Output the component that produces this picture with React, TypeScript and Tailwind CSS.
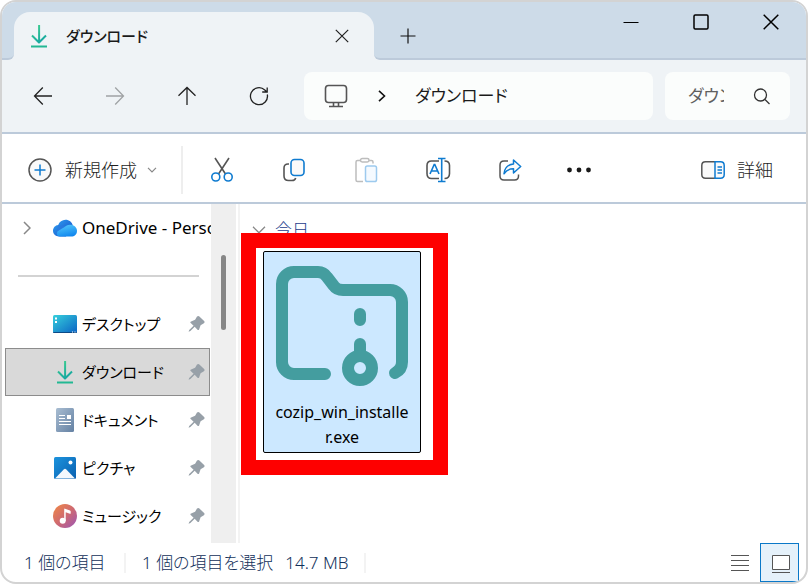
import React from "react";
import { clsx } from "clsx";

type IconProps = { className?: string };

function DownloadIcon({ className }: IconProps) {
  return (
    <svg viewBox="0 0 18 24" className={className} fill="none" strokeWidth="2" aria-hidden="true">
      <defs>
        <linearGradient id="download" gradientUnits="userSpaceOnUse" x1="2" y1="2" x2="12" y2="20">
          <stop offset="0" stopColor="#3fcf8e" />
          <stop offset="1" stopColor="#11a3a3" />
        </linearGradient>
      </defs>
      <path
        d="M9.1 1v17M2 11.5l7 7 7-7"
        stroke="url(#download)"
        strokeLinejoin="round"
      />
      <path d="M1 22.5h16" stroke="#22b893" />
    </svg>
  );
}

function PinIcon() {
  return (
    <svg viewBox="0 0 18 18" className="size-[18px] shrink-0" fill="#97a0a8" aria-hidden="true">
      <path d="M9 1.600c.8-.9 1.700-.9 2.400-.2l4.700 4.600c.7.8.6 1.700-.2 2.200l-3.300 2-1.500 4.200c-.3.800-1 .9-1.600.3l-2.800-2.900-4.300 4.300-1.800.7.600-1.800 4.400-4.200L2.700 8c-.6-.6-.4-1.300.4-1.600l4-1.600z" />
    </svg>
  );
}

function OneDriveIcon() {
  return (
    <svg viewBox="0 0 24 18" className="h-[18px] w-6" aria-hidden="true">
      <defs>
        <linearGradient id="cloudBack" x1="0" y1="0" x2="1" y2="1">
          <stop offset="0" stopColor="#2ea5f4" />
          <stop offset="1" stopColor="#1646c4" />
        </linearGradient>
        <linearGradient id="cloudFront" x1="0.2" y1="0" x2="0.6" y2="1">
          <stop offset="0" stopColor="#53c8fb" />
          <stop offset="1" stopColor="#1187ee" />
        </linearGradient>
      </defs>
      <path
        d="M6 17.500C2.600 17.500 0 15.100 0 11.800 0 8.700 2.300 6.300 5.200 6 6.300 2.800 9.200.700 12.500.700c3.700 0 6.500 2.300 7.300 5.600L13 17.500z"
        fill="url(#cloudBack)"
      />
      <path
        d="M7 17.500c-1.900 0-3.200-1.200-3.200-3 0-1.500.8-2.400 2-3.200l7.500-4.600c1-.6 2.300-1 3.700-1 4 0 7 2.700 7 6.200 0 3.300-2.600 5.600-5.800 5.600z"
        fill="url(#cloudFront)"
      />
      <path d="M5 6.100c3-.4 5.300 1 7.500 1.300L5.800 11.400C3.900 12.500 3.200 14 4 16" fill="#2b7be0" opacity="0.700" />
    </svg>
  );
}

function DesktopIcon() {
  return (
    <svg viewBox="0 0 24 18" className="h-[18px] w-6" aria-hidden="true">
      <defs>
        <linearGradient id="desktop" x1="0" y1="0" x2="1" y2="1">
          <stop offset="0" stopColor="#36d0dc" />
          <stop offset="1" stopColor="#0b63c4" />
        </linearGradient>
      </defs>
      <rect width="24" height="18" rx="1.500" fill="url(#desktop)" />
      <path d="M0 17h24q0 1-1 1H1q-1 0-1-1z" fill="#0d4a86" />
      <path d="M2 2.500h2v2H2zM2 6h2v2H2zM19 16.500h1v1h-1zM21.500 16.500h1v1h-1z" fill="#fff" />
    </svg>
  );
}

function DocumentIcon() {
  return (
    <svg viewBox="0 0 18 24" className="h-6 w-[18px]" aria-hidden="true">
      <defs>
        <linearGradient id="document" x1="0" y1="0" x2="1" y2="1">
          <stop offset="0" stopColor="#a9bdd2" />
          <stop offset="1" stopColor="#6481a3" />
        </linearGradient>
      </defs>
      <rect width="18" height="24" rx="1.500" fill="url(#document)" />
      <path d="M3 7.500h6M3 10.500h6M3 13.500h12M3 16.500h12" stroke="#fff" strokeWidth="1.200" />
      <path d="M11 7h4v4h-4z" fill="#fff" />
    </svg>
  );
}

function PicturesIcon() {
  return (
    <svg viewBox="0 0 22 22" className="size-[22px]" aria-hidden="true">
      <defs>
        <linearGradient id="pictures" x1="0" y1="0" x2="1" y2="1">
          <stop offset="0" stopColor="#1c93dd" />
          <stop offset="1" stopColor="#0a60b0" />
        </linearGradient>
      </defs>
      <rect width="22" height="22" rx="1.500" fill="url(#pictures)" />
      <path d="M1 21.500 9.700 12.500q1.300-1.300 2.600 0L21 21.500z" fill="#f3f8fd" />
      <circle cx="16.500" cy="5.500" r="2" fill="#fff" />
    </svg>
  );
}

function MusicIcon() {
  return (
    <svg viewBox="0 0 24 24" className="size-6" aria-hidden="true">
      <defs>
        <linearGradient id="music" x1="0" y1="0.100" x2="0.900" y2="1">
          <stop offset="0" stopColor="#ee8648" />
          <stop offset="0.500" stopColor="#cf6a70" />
          <stop offset="1" stopColor="#a057b0" />
        </linearGradient>
      </defs>
      <circle cx="12" cy="12" r="12" fill="url(#music)" />
      <circle cx="9.700" cy="16.800" r="3" fill="#fff" />
      <path d="M11.200 17V5.200q0-.8.8-.5l5 1.800q.7.300.7 1v1.700q0 .8-.8.500l-4.200-1.500V17z" fill="#fff" />
    </svg>
  );
}

function ZipFolderIcon() {
  return (
    <svg
      viewBox="0 0 156 140"
      className="h-[140px] w-[156px]"
      fill="none"
      stroke="#449d9f"
      strokeWidth="12"
      strokeLinecap="round"
      aria-hidden="true"
    >
      <path d="M61 122H30a12 12 0 0 1-12-12V32a12 12 0 0 1 12-12h24c4 0 7 2 9 5l7 9c2 3 5 4 9 4h47a12 12 0 0 1 12 12v60c0 5-3 9-7 11" />
      <path d="M96 62v6M96 92v8" />
      <circle cx="96" cy="116" r="12" />
    </svg>
  );
}

function ToolButton({
  label,
  className,
  children,
}: {
  label: string;
  className?: string;
  children: React.ReactNode;
}) {
  return (
    <button type="button" aria-label={label} className={clsx("flex h-12 items-center justify-center", className)}>
      {children}
    </button>
  );
}

const places = [
  { name: "デスクトップ", icon: <DesktopIcon /> },
  { name: "ダウンロード", icon: <DownloadIcon className="h-6 w-[18px]" />, selected: true },
  { name: "ドキュメント", icon: <DocumentIcon /> },
  { name: "ピクチャ", icon: <PicturesIcon /> },
  { name: "ミュージック", icon: <MusicIcon /> },
];

function TitleBar() {
  return (
    <header className="flex h-[58px] bg-[#eff3f6]">
      <div className="w-3 rounded-br-md border-b-2 border-[#bccada] bg-[#cddbe8]" />
      <div className="w-[360px] bg-[#cddbe8] pt-2.5">
        <div className="flex h-full items-center rounded-t-2xl bg-[#eff3f6] pr-5 pl-4">
          <DownloadIcon className="h-6 w-[18px]" />
          <span className="ml-[18px] flex-1 text-[15px] font-medium text-[#1a1a1a]">ダウンロード</span>
          <ToolButton label="タブを閉じる" className="w-6">
            <svg viewBox="0 0 14 14" className="size-3.5" stroke="#222" strokeWidth="1.200">
              <path d="m.8.8 12.400 12.400M13.200.8.800 13.200" />
            </svg>
          </ToolButton>
        </div>
      </div>
      <div className="flex flex-1 justify-between rounded-bl-md border-b-2 border-[#bccada] bg-[#cddbe8]">
        <ToolButton label="新しいタブ" className="mt-2.5 w-[68px]">
          <svg viewBox="0 0 16 16" className="size-4" stroke="#111" strokeWidth="1.200">
            <path d="M8 .5v15M.5 8h15" />
          </svg>
        </ToolButton>
        <div className="flex h-10">
          <ToolButton label="最小化" className="w-[70px]">
            <svg viewBox="0 0 16 16" className="size-4 -translate-y-1" stroke="#000" strokeWidth="1.200">
              <path d="M.5 8.500h15" />
            </svg>
          </ToolButton>
          <ToolButton label="最大化" className="w-[70px]">
            <svg viewBox="0 0 16 16" className="size-4 -translate-y-1" fill="none" stroke="#000" strokeWidth="1.500">
              <rect x="1" y="1" width="14" height="14" rx="1.200" />
            </svg>
          </ToolButton>
          <ToolButton label="閉じる" className="w-[70px]">
            <svg viewBox="0 0 16 16" className="size-4 -translate-y-1" stroke="#000" strokeWidth="1.500">
              <path d="m.7.7 14.600 14.600M15.300.7.700 15.300" />
            </svg>
          </ToolButton>
        </div>
      </div>
    </header>
  );
}

function NavBar() {
  return (
    <nav className="flex h-[74px] items-center border-b-2 border-[#bccada] bg-[#eff3f6] pr-4 pl-[5px]">
      <ToolButton label="戻る" className="w-[72px]">
        <svg viewBox="0 0 20 20" className="size-5" fill="none" stroke="#222" strokeWidth="1.300">
          <path d="M19 10H1.500M9.800 1.500 1.500 10l8.300 8.500" />
        </svg>
      </ToolButton>
      <ToolButton label="進む" className="w-[72px]">
        <svg viewBox="0 0 20 20" className="size-5" fill="none" stroke="#a0a3a5" strokeWidth="1.300">
          <path d="M1 10h17.500M10.200 1.500l8.300 8.500-8.300 8.500" />
        </svg>
      </ToolButton>
      <ToolButton label="上へ" className="w-[72px]">
        <svg viewBox="0 0 20 20" className="size-5" fill="none" stroke="#222" strokeWidth="1.300">
          <path d="M10 19V1.500M1.500 9.800 10 1.500l8.500 8.300" />
        </svg>
      </ToolButton>
      <ToolButton label="更新" className="w-[72px]">
        <svg viewBox="0 0 20 20" className="size-5" fill="none" stroke="#222" strokeWidth="1.300">
          <path d="M18.300 8.500A8.500 8.500 0 1 1 15.800 4L18 6M18.200 1.500V6h-5" />
        </svg>
      </ToolButton>
      <div className="ml-[9px] flex h-12 flex-1 items-center rounded-lg bg-[#fbfdfc] pl-5">
        <svg viewBox="0 0 24 24" className="size-6" fill="none" stroke="#555" strokeWidth="1.600" aria-hidden="true">
          <rect x="1.500" y="1.500" width="21" height="17" rx="3" />
          <path d="M9.500 19v3.500M14.500 19v3.500M5 22.500h14" />
        </svg>
        <svg viewBox="0 0 8 12" className="ml-[30px] h-3 w-2" fill="none" stroke="#111" strokeWidth="1.600" aria-hidden="true">
          <path d="m1 .8 5.500 5.200L1 11.200" />
        </svg>
        <span className="ml-[29px] text-[17px] text-[#1a1a1a]">ダウンロード</span>
      </div>
      <div className="ml-3 flex h-12 w-[125px] items-center rounded-lg bg-[#fbfdfc] pl-[23px]">
        <input
          type="text"
          aria-label="検索"
          placeholder="ダウンロードの検索"
          className="w-9 bg-transparent text-[17px] outline-none placeholder:text-[#606060]"
        />
        <ToolButton label="検索を実行" className="ml-6 w-7">
          <svg viewBox="0 0 18 18" className="size-[18px]" fill="none" stroke="#333" strokeWidth="1.300">
            <circle cx="7.500" cy="8" r="6" />
            <path d="m12 12.500 4.500 4.500" />
          </svg>
        </ToolButton>
      </div>
    </nav>
  );
}

function CommandBar() {
  return (
    <div className="flex h-[70px] items-center border-b-2 border-[#bccada] bg-white pt-1 text-lg text-[#1f1f1f]">
      <button type="button" className="flex h-12 w-[179px] items-center pl-[26px]">
        <svg viewBox="0 0 24 24" className="size-6" fill="none" strokeWidth="1.500" aria-hidden="true">
          <circle cx="12" cy="12" r="11" fill="#fafafa" stroke="#555" />
          <path d="M12 6.500v11M6.500 12h11" stroke="#0f7bd0" />
        </svg>
        <span className="ml-[13px] font-light">新規作成</span>
        <svg viewBox="0 0 10 6" className="ml-2.5 h-1.5 w-2.5" fill="none" stroke="#888" strokeWidth="1.200" aria-hidden="true">
          <path d="m1 .8 4 4 4-4" />
        </svg>
      </button>
      <div className="h-12 w-0.5 bg-[#eee]" />
      <ToolButton label="切り取り" className="ml-[3px] w-[72px]">
        <svg viewBox="0 0 24 26" className="h-[26px] w-6" fill="none" strokeWidth="1.600">
          <path d="m5 1 10.500 16M19 1 8.500 17" stroke="#555" />
          <circle cx="5.800" cy="20" r="4" stroke="#0f7bd0" />
          <circle cx="18.200" cy="20" r="4" stroke="#0f7bd0" />
        </svg>
      </ToolButton>
      <ToolButton label="コピー" className="w-[72px]">
        <svg viewBox="0 0 24 24" className="size-6" fill="none" strokeWidth="1.600">
          <path d="M7 6H6C3.500 6 2 7.500 2 10v8c0 3 1.500 4.500 4.500 4.500H10c2 0 3.300-.8 3.700-2.500" stroke="#555" />
          <rect x="9" y="1.500" width="13" height="16" rx="3.500" fill="#fafafa" stroke="#0f7bd0" />
        </svg>
      </ToolButton>
      <ToolButton label="貼り付け" className="w-[72px]">
        <svg viewBox="0 0 24 26" className="h-[26px] w-6" fill="none" strokeWidth="1.500">
          <path d="M7 3.500H3.500q-1.500 0-1.500 1.500v18q0 1.500 1.500 1.500H9M15 3.500h2.500q1.500 0 1.500 1.500v1.500" stroke="#bdbdbd" />
          <rect x="6.500" y="1.500" width="8.500" height="3.500" rx="1.700" fill="#fff" stroke="#bdbdbd" />
          <rect x="11.500" y="9" width="11" height="15.500" rx="1.800" fill="#f5faff" stroke="#9dcaee" />
        </svg>
      </ToolButton>
      <ToolButton label="名前の変更" className="w-[72px]">
        <svg viewBox="0 0 26 26" className="size-[26px]" fill="none" strokeWidth="1.600">
          <path
            d="M14 4H6.500C3.500 4 2 5.500 2 8.500v8C2 19.500 3.500 21.500 6.500 21.500H14M19.500 4C22.500 4 24.500 5.500 24.500 8.500v8c0 3-2 5-5 5"
            stroke="#555"
          />
          <path d="m5 17 4.200-9.500h.6L14 17M6.500 14h6M16.700 1.500v23M13 1.500h7.500M13 24.500h7.500" stroke="#0f7bd0" />
        </svg>
      </ToolButton>
      <ToolButton label="共有" className="w-[72px]">
        <svg viewBox="0 0 24 24" className="size-6" fill="none" strokeWidth="1.500" strokeLinejoin="round">
          <path d="M10 3H6Q2 3 2 7v11q0 4 4 4h10.500q4 0 4-4v-1.500" stroke="#555" />
          <path d="M15.500 2 22.700 8.500l-7.200 6.500v-4.200C11 10.700 8.500 12 6 15.800c.5-5.800 4-9.300 9.500-9.800z" fill="#fafafa" stroke="#0f7bd0" />
        </svg>
      </ToolButton>
      <ToolButton label="もっと見る" className="w-[66px]">
        <svg viewBox="0 0 24 6" className="h-1.5 w-6" fill="#1a1a1a">
          <circle cx="2.500" cy="3" r="2.400" />
          <circle cx="12" cy="3" r="2.400" />
          <circle cx="21.500" cy="3" r="2.400" />
        </svg>
      </ToolButton>
      <button type="button" className="mr-[33px] ml-auto flex h-12 items-center gap-3">
        <svg viewBox="0 0 24 18" className="h-[18px] w-6" fill="#fafafa" strokeWidth="1.500" aria-hidden="true">
          <path d="M14 .8H4.500Q.8.800.800 4.500v9q0 3.700 3.700 3.700H14" stroke="#555" />
          <path d="M14 .8h5.500q3.700 0 3.700 3.700v9q0 3.700-3.700 3.700H14z" stroke="#0f7bd0" />
          <path d="M16.500 6H21M16.500 9H21M16.500 12H21" stroke="#0f7bd0" />
        </svg>
        <span className="font-light">詳細</span>
      </button>
    </div>
  );
}

function Sidebar() {
  return (
    <aside className="flex w-[238px] shrink-0 border-r-2 border-[#f3f3f3]">
      <div className="w-[209px] overflow-hidden text-[15px] text-black">
        <a href="#onedrive" className="flex h-12 items-center pl-[21px] text-[17px] whitespace-nowrap">
          <svg viewBox="0 0 8 14" className="h-3.5 w-2 shrink-0" fill="none" stroke="#888" strokeWidth="1.500" aria-hidden="true">
            <path d="m1 1 6 6-6 6" />
          </svg>
          <span className="mr-[5px] ml-[22px] shrink-0">
            <OneDriveIcon />
          </span>
          <span className="flex-1 overflow-hidden">OneDrive - Personal</span>
        </a>
        <div className="flex h-12 items-center pr-3 pl-4">
          <hr className="w-full border-t-2 border-[#d3d3d3]" />
        </div>
        <ul>
          {places.map((place) => (
            <li key={place.name}>
              <a
                href="#place"
                className={clsx(
                  "mr-px ml-[3px] flex h-12 items-center border pr-[3px] pl-[46px]",
                  place.selected ? "border-[#8c8c8c] bg-[#d9d9d9]" : "border-transparent",
                )}
              >
                <span className="flex w-[26px] justify-center">{place.icon}</span>
                <span className="ml-1 flex-1">{place.name}</span>
                <PinIcon />
              </a>
            </li>
          ))}
        </ul>
      </div>
      <div className="flex w-[25px] justify-center bg-[#efefef] pt-[51px]">
        <div className="h-[75px] w-[5px] rounded-full bg-[#868686]" />
      </div>
    </aside>
  );
}

function FileArea() {
  return (
    <main className="relative flex-1 pt-3 pl-3">
      <h2 className="flex h-7 items-center gap-[9px] text-[17px] font-light text-[#1d3c8c]">
        <svg viewBox="0 0 14 8" className="h-2 w-3.5" fill="none" stroke="#888" strokeWidth="1.300" aria-hidden="true">
          <path d="m1 .8 6 6 6-6" />
        </svg>
        今日
      </h2>
      {/* highlight frame around the installer */}
      <div className="absolute top-[29px] left-px border-[15px] border-[#fe0000] bg-white pt-[3px] pr-3 pb-[7px] pl-[7px]">
        <button
          type="button"
          className="flex h-[202px] w-[158px] flex-col items-center rounded-xs border border-black bg-[#cce8ff] text-base leading-[25px] text-black"
        >
          <ZipFolderIcon />
          <span className="mt-2 w-[140px] break-all">cozip_win_installer.exe</span>
        </button>
      </div>
    </main>
  );
}

function StatusBar() {
  return (
    <footer className="flex h-[39px] items-center pr-[7px] text-[17px] font-light text-[#12305a]">
      <span className="w-[122px] pl-[22px]">1 個の項目</span>
      <div className="h-5 w-0.5 bg-[#f3f3f3]" />
      <span className="pl-4">1 個の項目を選択</span>
      <span className="mr-4 ml-3">14.7 MB</span>
      <div className="h-5 w-0.5 bg-[#f3f3f3]" />
      <div className="ml-auto flex items-center">
        <ToolButton label="詳細表示" className="w-10">
          <svg viewBox="0 0 18 18" className="size-[18px]" stroke="#555" strokeWidth="1">
            <path d="M0 1.500h18M0 6.500h18M0 11.500h18M0 16.500h18" />
          </svg>
        </ToolButton>
        <button
          type="button"
          aria-label="大アイコン"
          className="flex size-[39px] items-center justify-center border border-[#0a78c8] bg-[#e5f1fa] pt-0.5 pl-0.5"
        >
          <svg viewBox="0 0 18 18" className="size-[18px]" fill="#fff" stroke="#555" strokeWidth="1">
            <path d="M.5.500h17v14H.5zM0 17.500h18" />
          </svg>
        </button>
      </div>
    </footer>
  );
}

export default function App() {
  return (
    <div className="flex min-h-screen flex-col overflow-hidden rounded-2xl border-2 border-[#d3d3d3] bg-white font-['Noto_Sans','Noto_Sans_CJK_JP',sans-serif] [font-feature-settings:'palt']">
      <TitleBar />
      <NavBar />
      <CommandBar />
      <div className="flex flex-1">
        <Sidebar />
        <FileArea />
      </div>
      <StatusBar />
    </div>
  );
}
